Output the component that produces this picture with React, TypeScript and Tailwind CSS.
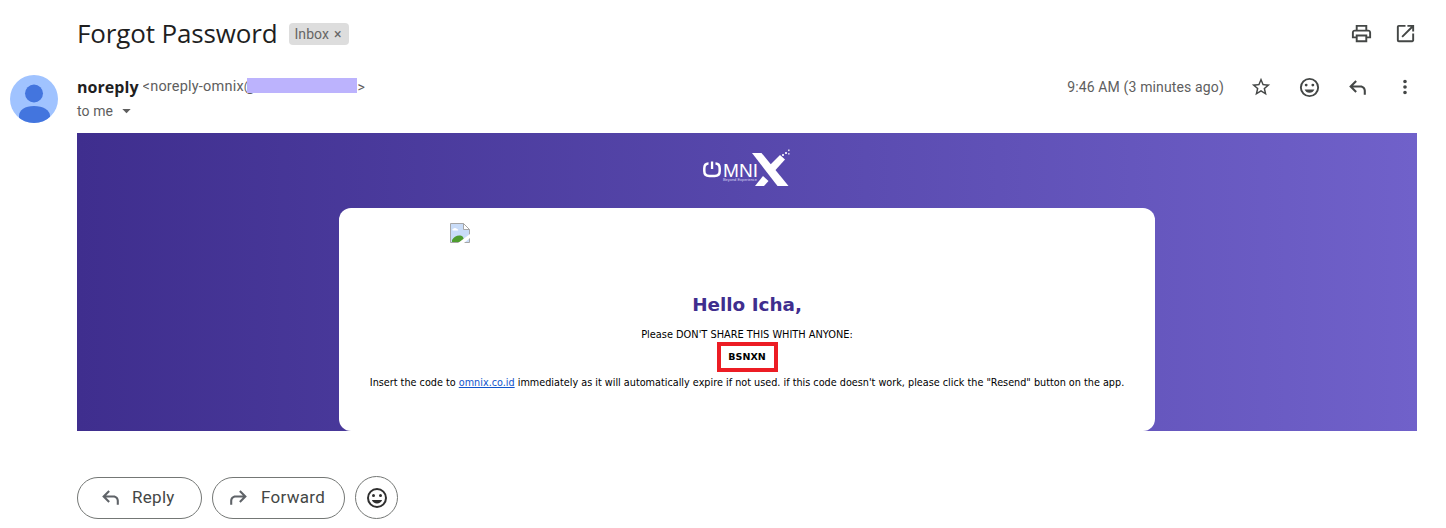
import React from "react";

const G = "#444746";

function Icon({ d, size = 24, color = G, className = "" }: { d: string; size?: number; color?: string; className?: string }) {
  return (
    <svg width={size} height={size} viewBox="0 0 24 24" fill={color} className={`shrink-0 ${className}`}>
      <path d={d} />
    </svg>
  );
}

const PRINT = "M19 8h-1V3H6v5H5c-1.66 0-3 1.34-3 3v6h4v4h12v-4h4v-6c0-1.66-1.34-3-3-3zM8 5h8v3H8V5zm8 14H8v-4h8v4zm2-4v-2H6v2H4v-4c0-.55.45-1 1-1h14c.55 0 1 .45 1 1v4h-2z";
const OPEN = "M19 19H5V5h7V3H5a2 2 0 0 0-2 2v14a2 2 0 0 0 2 2h14c1.1 0 2-.9 2-2v-7h-2v7zM14 3v2h3.59l-9.83 9.83 1.41 1.41L19 6.41V10h2V3h-7z";
const STAR = "M22 9.24l-7.19-.62L12 2 9.19 8.63 2 9.24l5.46 4.73L5.82 21 12 17.27 18.18 21l-1.63-7.03L22 9.24zM12 15.4l-3.76 2.27 1-4.28-3.32-2.88 4.38-.38L12 6.1l1.71 4.04 4.38.38-3.32 2.88 1 4.28L12 15.4z";
const SMILE = "M12 2a10 10 0 1 0 0 20 10 10 0 0 0 0-20zm0 18a8 8 0 1 1 0-16 8 8 0 0 1 0 16zM8.5 11a1.5 1.5 0 1 0 0-3 1.5 1.5 0 0 0 0 3zm7 0a1.5 1.5 0 1 0 0-3 1.5 1.5 0 0 0 0 3zM12 17.5c2.33 0 4.31-1.46 5.11-3.5H6.89c.8 2.04 2.78 3.5 5.11 3.5z";
const REPLY = "M20 19h-2v-4c0-1.65-1.35-3-3-3H7.83l3.58 3.59L10 17l-6-6 6-6 1.41 1.41L7.83 10H15c2.76 0 5 2.24 5 5v4z";
const FORWARD = "M4 19h2v-4c0-1.65 1.35-3 3-3h7.17l-3.58 3.59L14 17l6-6-6-6-1.41 1.41L16.17 10H9c-2.76 0-5 2.24-5 5v4z";
const MORE = "M12 8a2 2 0 1 0 0-4 2 2 0 0 0 0 4zm0 2a2 2 0 1 0 0 4 2 2 0 0 0 0-4zm0 6a2 2 0 1 0 0 4 2 2 0 0 0 0-4z";

function Avatar() {
  return (
    <svg width="48" height="48" viewBox="0 0 48 48" className="block shrink-0">
      <defs>
        <clipPath id="av"><circle cx="24" cy="24" r="24" /></clipPath>
      </defs>
      <g clipPath="url(#av)">
        <rect width="48" height="48" fill="#a0c3ff" />
        <circle cx="24" cy="18.5" r="9" fill="#4375de" />
        <path d="M9 48V41c0-6 6-10 15-10s16 4 16 10v7z" fill="#4375de" />
      </g>
    </svg>
  );
}

function Logo() {
  return (
    <svg width="90" height="40" viewBox="0 0 90 40" className="block">
      <path d="M5.500 14.500C2.800 14.500 1.300 16.500 1.300 19.500v2.500c0 3.200 1.800 5 5 5h5.400c3.200 0 5-1.800 5-5v-2.500c0-3-1.500-5-4.200-5" fill="none" stroke="#fff" strokeWidth="2.500" />
      <rect x="7.900" y="12.500" width="2.300" height="7.500" fill="#fff" />
      <text x="20" y="28" fill="#fff" fontFamily="'Liberation Sans', sans-serif" fontSize="19" textLength="35" lengthAdjust="spacingAndGlyphs">MNI</text>
      <text x="20" y="31.500" fill="#d8d2f2" fontFamily="'Liberation Sans', sans-serif" fontSize="3.400" textLength="34" lengthAdjust="spacingAndGlyphs">Beyond Experience</text>
      <polygon points="49,4 58.500,4 85.500,37 74.500,37" fill="#fff" />
      <polygon points="77,6 82,10.500 68,26 62.500,20.500" fill="#fff" />
      <polygon points="52,37 60,27 65.500,32 61,37" fill="#fff" />
      <rect x="79" y="5" width="2" height="2" fill="#fff" opacity=".8" />
      <rect x="82" y="3" width="2" height="2" fill="#fff" opacity=".8" />
      <rect x="85" y="0.500" width="1.600" height="1.600" fill="#fff" opacity=".8" />
      <rect x="85" y="4" width="1.600" height="1.600" fill="#fff" opacity=".7" />
    </svg>
  );
}

function BrokenImage() {
  return (
    <svg width="20" height="20" viewBox="0 0 20 20" className="block">
      <path d="M.5.5h13l6 6v13H.5z" fill="#c9dcf8" stroke="#a6a6a6" />
      <path d="M13.500.5v6h6z" fill="#fff" stroke="#a6a6a6" />
      <path d="M3 6c1-1.500 3-1.500 4 0 1 0 1.500 1 1 1.500H3C2 7.500 2 6 3 6z" fill="#fff" />
      <path d="M2 19v-2c2-4 8-6 11-3l2 5z" fill="#4f9d2f" />
      <path d="M8 20 20 11v4l-6 5z" fill="#fff" />
    </svg>
  );
}

function PillButton({ icon, label, className }: { icon: string; label: string; className: string }) {
  return (
    <button className={`h-[42px] rounded-full border border-[#747775] flex items-center text-[#444746] text-[17px] tracking-[0.3px] font-normal ${className}`}>
      <Icon d={icon} size={25} color="#5f6368" />
      <span>{label}</span>
    </button>
  );
}

export default function App() {
  return (
    <div className="w-[1446px] h-[528px] bg-white overflow-hidden font-['Roboto','Liberation_Sans',sans-serif]">
      <div className="h-[66px] pl-[77px] pr-[29px] flex items-center justify-between">
        <div className="flex items-center">
          <h1 className="text-[26px] leading-8 text-[#1f1f1f] font-['Open_Sans',sans-serif] tracking-[-0.15px]">Forgot Password</h1>
          <span className="ml-[12px] mt-[1px] h-[22px] w-[60px] rounded bg-[#dddddd] flex items-center pl-[5px] text-sm tracking-[0.1px] text-[#666666]">
            Inbox<span className="ml-[5px] text-sm leading-none">×</span>
          </span>
        </div>
        <div className="flex items-center gap-[21px]">
          <Icon d={PRINT} size={23} />
          <Icon d={OPEN} size={23} />
        </div>
      </div>

      <div className="h-[67px] pl-[10px] pr-[29px] flex items-start">
        <div className="mt-[9px]"><Avatar /></div>
        <div className="ml-[19px] mt-[10px] flex-1 min-w-0">
          <div className="flex items-center h-[22px] relative">
            <span className="text-base font-bold text-[#1f1f1f] font-['Open_Sans',sans-serif] tracking-[0.05px]">noreply</span>
            <span className="ml-[4px] w-[215px] overflow-hidden whitespace-nowrap text-[14.5px] tracking-[0.2px] text-[#5e5e5e]">&lt;noreply-omnix@</span>
            <span className="absolute left-[170px] top-[2px] w-[110px] h-[15px] bg-[#bcb3fd]" />
            <span className="text-sm text-[#5e5e5e]">&gt;</span>
          </div>
          <div className="flex items-center h-[20px] mt-[3px] text-sm tracking-[0.1px] text-[#5e5e5e]">
            to me
            <svg width="9" height="5" viewBox="0 0 10 6" className="ml-[9px]"><path d="M0 0h10L5 5z" fill="#5e5e5e" /></svg>
          </div>
        </div>
        <div className="flex items-center h-[24px] mt-[9px]">
          <span className="text-sm tracking-[0.14px] text-[#5e5e5e] mr-[25px]">9:46 AM (3 minutes ago)</span>
          <div className="flex items-center gap-[24px]">
            <div className="w-6 flex justify-center"><Icon d={STAR} size={22} /></div>
            <div className="w-6 flex justify-center"><Icon d={SMILE} size={23} /></div>
            <div className="w-6 flex justify-center"><Icon d={REPLY} size={25} /></div>
            <div className="w-6 flex justify-center"><Icon d={MORE} size={22} /></div>
          </div>
        </div>
      </div>

      <div className="ml-[77px] w-[1340px] h-[298px] bg-gradient-to-r from-[#3f2e8e] to-[#7061ca] flex flex-col items-center">
        <div className="h-[75px] flex items-center justify-center w-full pb-[3px] pl-[2px]"><Logo /></div>
        <div className="w-[816px] h-[223px] bg-white rounded-[12px] font-['DejaVu_Sans',sans-serif] text-black text-center">
          <div className="pt-[15px] pl-[111px]"><BrokenImage /></div>
          <h2 className="mt-[50px] text-[18.4px] leading-6 font-bold text-[#3f2e8e]">Hello Icha,</h2>
          <p className="mt-[11px] text-[9.8px] leading-[14px]">Please DON'T SHARE THIS WHITH ANYONE:</p>
          <div className="flex justify-center">
            <span className="w-[61px] h-[30px] border-[4px] border-[#ec1c24] flex items-center justify-center text-[9.5px] font-bold">BSNXN</span>
          </div>
          <p className="mt-[4px] text-[9.68px] leading-[14px]">
            Insert the code to <a className="text-[#1155cc] underline" href="#">omnix.co.id</a> immediately as it will automatically expire if not used. if this code doesn't work, please click the "Resend" button on the app.
          </p>
        </div>
      </div>

      <div className="mt-[45px] pl-[77px] flex items-center gap-[10px]">
        <PillButton icon={REPLY} label="Reply" className="w-[125px] pl-[20px] gap-[9px]" />
        <PillButton icon={FORWARD} label="Forward" className="w-[133px] pl-[13px] gap-[10px]" />
        <button className="w-[43px] h-[43px] rounded-full border border-[#747775] flex items-center justify-center">
          <Icon d={SMILE} size={24} color="#2f2f2f" />
        </button>
      </div>
    </div>
  );
}
